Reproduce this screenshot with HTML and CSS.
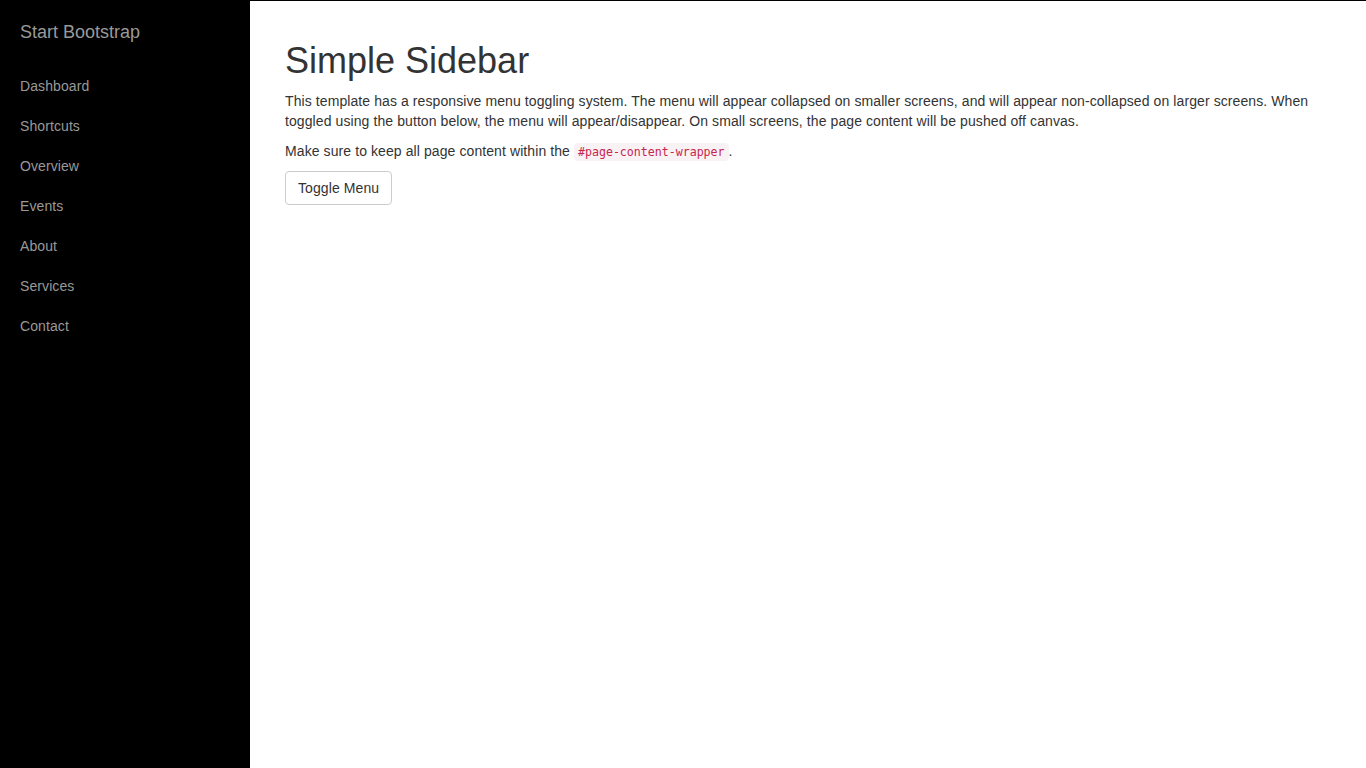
FILE: index.html
```html
<!DOCTYPE html>
<html lang="en">
<head>
<meta charset="utf-8">
<title>Simple Sidebar</title>
<link rel="stylesheet" href="styles.css">
</head>
<body>
<div class="wrapper">
  <nav class="sidebar">
    <div class="brand">Start Bootstrap</div>
    <ul class="nav">
      <li><a href="#">Dashboard</a></li>
      <li><a href="#">Shortcuts</a></li>
      <li><a href="#">Overview</a></li>
      <li><a href="#">Events</a></li>
      <li><a href="#">About</a></li>
      <li><a href="#">Services</a></li>
      <li><a href="#">Contact</a></li>
    </ul>
  </nav>
  <main class="content">
    <div class="container">
      <h1>Simple Sidebar</h1>
      <p>This template has a responsive menu toggling system. The menu will appear collapsed on smaller screens, and will appear non-collapsed on larger screens. When toggled using the button below, the menu will appear/disappear. On small screens, the page content will be pushed off canvas.</p>
      <p>Make sure to keep all page content within the <code>#page-content-wrapper</code>.</p>
      <button class="btn">Toggle Menu</button>
    </div>
  </main>
</div>
</body>
</html>
```
FILE: styles.css
```css
* { box-sizing: border-box; }
html, body { margin: 0; padding: 0; height: 100%; }
body {
  font-family: "Liberation Sans", Arial, sans-serif;
  font-size: 14px;
  line-height: 1.42857143;
  letter-spacing: 0.09px;
  color: #333;
  background: #fff;
}
.wrapper {
  display: flex;
  min-height: 100vh;
}
.sidebar {
  width: 250px;
  flex: 0 0 250px;
  background: #000;
}
.brand {
  height: 65px;
  line-height: 65px;
  font-size: 18px;
  padding-left: 20px;
  color: #999;
  letter-spacing: 0;
}
.nav {
  list-style: none;
  margin: 1px 0 0;
  padding: 0;
}
.nav li {
  line-height: 40px;
}
.nav a {
  display: block;
  padding-left: 20px;
  color: #999;
  text-decoration: none;
}
.content {
  flex: 1;
  border-top: 1px solid #000;
  padding: 20px;
}
.container {
  padding: 0 15px;
}
h1 {
  font-size: 36px;
  font-weight: 500;
  line-height: 1.1;
  letter-spacing: 0;
  margin: 20px 0 10px;
}
p {
  margin: 0 0 10px;
}
code {
  font-family: "DejaVu Sans Mono", monospace;
  font-size: 11.6px;
  letter-spacing: 0;
  padding: 2px 4px;
  color: #c7254e;
  background: #f9f2f4;
  border-radius: 4px;
}
.btn {
  font-family: inherit;
  font-size: 14px;
  line-height: 1.42857143;
  letter-spacing: 0.09px;
  padding: 6px 12px;
  color: #333;
  background: #fff;
  border: 1px solid #ccc;
  border-radius: 4px;
}
```
